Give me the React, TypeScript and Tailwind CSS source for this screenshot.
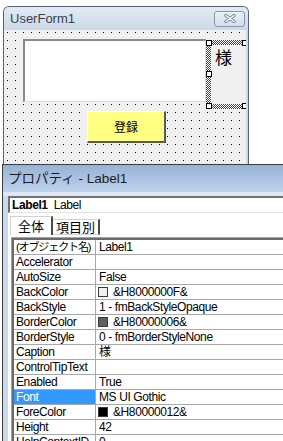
import React from "react";

const rows: [string, string, string?][] = [
  ["(オブジェクト名)", "Label1"],
  ["Accelerator", ""],
  ["AutoSize", "False"],
  ["BackColor", "&H8000000F&", "#f0f0f0"],
  ["BackStyle", "1 - fmBackStyleOpaque"],
  ["BorderColor", "&H80000006&", "#5f5f5f"],
  ["BorderStyle", "0 - fmBorderStyleNone"],
  ["Caption", "様"],
  ["ControlTipText", ""],
  ["Enabled", "True"],
  ["Font", "MS UI Gothic"],
  ["ForeColor", "&H80000012&", "#000000"],
  ["Height", "42"],
  ["HelpContextID", "0"],
];

const uiFont = "font-['Liberation_Sans','Noto_Sans_CJK_JP',sans-serif]";

const Handle = ({ className }: { className: string }) => (
  <div className={`absolute w-[6px] h-[6px] bg-white border border-black ${className}`} />
);

const UserForm = () => {
  return (
    <div className="w-[246px] h-[158px] rounded-t-[6px] border border-b-0 border-[#56626f] bg-[#cad9ea] flex flex-col overflow-hidden">
      {/* title bar */}
      <div className="h-[23px] shrink-0 flex items-center justify-between pl-[6px] pr-[3px] bg-gradient-to-b from-[#e2eaf4] to-[#cbd9e9]">
        <span className="text-[13px] text-[#3b3f45] leading-none">UserForm1</span>
        <div className="w-[31px] h-[16px] rounded-[3px] border border-[#8798ae] bg-gradient-to-b from-[#eaf0f7] to-[#d3deeb] flex items-center justify-center">
          <svg width="12" height="9" viewBox="0 0 12 9">
            <path d="M2 1.5 L10 7.5 M10 1.5 L2 7.5" stroke="#7b8595" strokeWidth="3.4" strokeLinecap="round" />
            <path d="M2 1.5 L10 7.5 M10 1.5 L2 7.5" stroke="#ffffff" strokeWidth="1.4" strokeLinecap="round" />
          </svg>
        </div>
      </div>
      {/* client area */}
      <div className="flex-1 flex pr-[2px]">
        <div className="relative flex-1 overflow-hidden bg-[#f0f0f0] bg-[conic-gradient(at_1px_1px,transparent_75%,#000_0)] bg-size-[8px_8px] bg-position-[3px_2px]">
          {/* TextBox1 */}
          <div className="absolute left-[19px] top-[9px] w-[183px] h-[63px] bg-white border-t-2 border-l-2 border-[#8a8a8a] border-r border-b border-r-[#dcdcdc] border-b-[#dcdcdc]" />
          {/* Label1 (selected) */}
          <div className="absolute left-[202px] top-[10px] w-[46px] h-[69px] bg-white bg-[conic-gradient(#444_25%,transparent_0_50%,#444_0_75%,transparent_0)] bg-size-[2px_2px]">
            <div className="absolute left-[5px] top-[5px] right-0 bottom-[5px] bg-[#f0f0f0] pl-[4px] pt-[2px]">
              <span className="text-[17px] leading-none text-black font-['Noto_Sans_CJK_JP',sans-serif]">様</span>
            </div>
            <Handle className="left-0 top-0" />
            <Handle className="left-0 top-[31px]" />
            <Handle className="left-0 top-[63px]" />
            <Handle className="left-[36px] top-0" />
            <Handle className="left-[36px] top-[63px]" />
          </div>
          {/* CommandButton1 */}
          <div className="absolute left-[83px] top-[81px] w-[79px] h-[32px] bg-[#ffff84] border-t border-l border-white border-r-2 border-b-2 border-r-[#5a5a5a] border-b-[#5a5a5a] flex items-center justify-center">
            <span className="text-[12px] text-black font-['Noto_Sans_CJK_JP',sans-serif] leading-none">登録</span>
          </div>
        </div>
      </div>
    </div>
  );
};

const PropertyGrid = () => {
  return (
    <div className="border-t border-l border-[#a3a3a3] ml-[3px] mt-[2px]">
      <div className="border-t-2 border-l-2 border-[#6a6a6a]">
        {rows.map(([name, value, swatch], i) => {
          const selected = name === "Font";
          return (
            <div key={name} className="h-[15px] flex border-b border-[#a8a8a8]">
              <div
                className={`w-[82px] shrink-0 border-r border-[#a8a8a8] pl-[2px] leading-[14px] whitespace-nowrap overflow-hidden ${
                  selected ? "bg-[#3399ff] text-white" : "text-black"
                } ${i === 0 ? "text-[11px] tracking-[-1.1px]" : ""}`}
              >
                {name}
              </div>
              <div className="flex-1 flex items-center pl-[2px] leading-[14px] whitespace-nowrap text-black">
                {swatch ? (
                  <>
                    <span className="w-[10px] h-[10px] border border-[#3a3a3a] mr-[5px] shrink-0" style={{ backgroundColor: swatch }} />
                    <span>{value}</span>
                  </>
                ) : (
                  <span className="pl-[1px]">{value}</span>
                )}
              </div>
            </div>
          );
        })}
      </div>
    </div>
  );
};

const PropertiesWindow = () => {
  return (
    <div className="ml-[2px] flex-1 border-t border-l border-[#3d3d3d] bg-[#c9d9ec] flex flex-col">
      <div className="h-[27px] shrink-0 flex items-center pl-[5px] bg-gradient-to-b from-[#97b2d5] to-[#bdd3ed]">
        <span className="text-[13.5px] text-[#1d1d1d] leading-none">プロパティ - Label1</span>
      </div>
      <div className="h-[4px] shrink-0 bg-[#dde8f4]" />
      <div className="flex-1 ml-[5px] bg-white flex flex-col text-[12px] tracking-[-0.4px]">
        {/* object combo */}
        <div className="h-[17px] shrink-0 flex items-center gap-[6px] pl-[2px] border-t-2 border-l-2 border-[#707070] border-b border-b-[#e3e3e3]">
          <span className="font-bold">Label1</span>
          <span>Label</span>
        </div>
        {/* tabs */}
        <div className="mt-[3px] h-[19px] shrink-0 flex items-end pl-[2px] text-[13px] tracking-normal font-['Noto_Sans_CJK_JP',sans-serif]">
          <div className="h-[19px] w-[43px] border-t border-l border-[#d0d0d0] border-r-2 border-r-[#4a4a4a] flex items-center justify-center">
            全体
          </div>
          <div className="h-[16px] w-[47px] border-t border-[#d0d0d0] border-r-2 border-r-[#4a4a4a] border-b border-b-[#d0d0d0] flex items-center justify-center">
            項目別
          </div>
        </div>
        <PropertyGrid />
      </div>
    </div>
  );
};

export default function App() {
  return (
    <div className={`w-[283px] h-[441px] overflow-hidden bg-white flex flex-col ${uiFont}`}>
      <div className="h-[164px] shrink-0 pt-[6px] pl-[3px]">
        <UserForm />
      </div>
      <PropertiesWindow />
    </div>
  );
}
